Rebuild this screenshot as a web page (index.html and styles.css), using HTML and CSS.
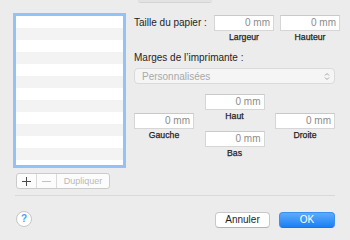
FILE: index.html
```html
<!DOCTYPE html>
<html>
<head>
    <link rel="stylesheet" href="styles.css">
</head>
<body>
    <div class="tab-edge"></div>

    <div class="main">
        <div class="list-col">
            <div class="paper-list"></div>
            <div class="seg">
                <span class="seg-btn add">
                    <svg width="9" height="9" viewBox="0 0 9 9"><path d="M4.5 0V9M0 4.5H9" stroke="#4a4a4a" stroke-width="1"/></svg>
                </span>
                <span class="seg-btn remove">
                    <svg width="9" height="9" viewBox="0 0 9 9"><path d="M0 4.5H9" stroke="#c2c2c2" stroke-width="1"/></svg>
                </span>
                <span class="seg-btn dup">Dupliquer</span>
            </div>
        </div>

        <div class="form-col">
            <div class="size-grid">
                <span class="form-label">Taille du papier :</span>
                <div class="field">0 mm</div>
                <div class="field">0 mm</div>
                <span></span>
                <span class="sub-label">Largeur</span>
                <span class="sub-label">Hauteur</span>
            </div>

            <div class="form-label margins-title">Marges de l’imprimante :</div>
            <div class="popup">
                <span>Personnalisées</span>
                <svg width="6" height="9" viewBox="0 0 6 9"><path d="M1 3.5L3 1.5L5 3.5M1 5.5L3 7.5L5 5.5" fill="none" stroke="#a4a4a4" stroke-width="1"/></svg>
            </div>

            <div class="margin-grid">
                <div class="margin-col">
                    <div class="field">0 mm</div>
                    <span class="sub-label">Gauche</span>
                </div>
                <div class="margin-col">
                    <div class="field">0 mm</div>
                    <span class="sub-label">Haut</span>
                    <div class="field bottom-field">0 mm</div>
                    <span class="sub-label">Bas</span>
                </div>
                <div class="margin-col">
                    <div class="field">0 mm</div>
                    <span class="sub-label">Droite</span>
                </div>
            </div>
        </div>
    </div>

    <div class="separator"></div>

    <div class="footer">
        <span class="help">?</span>
        <div class="actions">
            <button class="btn">Annuler</button>
            <button class="btn primary">OK</button>
        </div>
    </div>
</body>
</html>
```

FILE: styles.css
```css
body {
    margin: 0;
    background-color: #ececec;
    color: #222;
    font-family: 'Liberation Sans', Arial, sans-serif;
    font-size: 10px;
    width: 350px;
    height: 240px;
    overflow: hidden;
}
.tab-edge {
    margin-left: 138px;
    width: 74px;
    height: 2px;
    background-color: #e3e3e3;
    border-bottom: 1px solid #d3d3d3;
    border-radius: 0 0 3px 3px;
}
.main {
    display: flex;
    margin-top: 10px;
    padding-left: 13px;
}
.list-col {
    width: 113px;
}
.paper-list {
    box-sizing: border-box;
    width: 113px;
    height: 155px;
    border: 3px solid #93c2f4;
    background: repeating-linear-gradient(#ffffff 0 12px, #f3f3f3 12px 24px);
}
.seg {
    display: flex;
    box-sizing: border-box;
    width: 94px;
    height: 16px;
    margin: 5px 0 0 3px;
    border: 1px solid #cbcbcb;
    border-radius: 3px;
    background-color: #fcfcfc;
}
.seg-btn {
    display: flex;
    align-items: center;
    justify-content: center;
    border-right: 1px solid #dadada;
}
.seg-btn svg {
    shape-rendering: crispEdges;
}
.add {
    width: 19px;
}
.remove {
    width: 19px;
}
.dup {
    flex: 1;
    border-right: none;
    color: #b9b9b9;
    font-size: 9px;
}
.form-col {
    width: 201px;
    margin-left: 8px;
    padding-top: 2px;
}
.size-grid {
    display: grid;
    grid-template-columns: 74px 60px 60px;
    column-gap: 6px;
    align-items: center;
}
.form-label {
    color: #1e1e1e;
    line-height: 12px;
}
.field {
    box-sizing: border-box;
    width: 60px;
    height: 16px;
    padding-right: 3px;
    border: 1px solid #d6d6d6;
    border-top-color: #c9c9c9;
    background-color: #fff;
    color: #8c8c8c;
    line-height: 14px;
    text-align: right;
}
.sub-label {
    margin-top: 1px;
    color: #1e1e1e;
    font-size: 8.7px;
    line-height: 11px;
    text-align: center;
    -webkit-text-stroke: 0.25px #1e1e1e;
}
.margins-title {
    margin-top: 9px;
}
.popup {
    display: flex;
    justify-content: space-between;
    align-items: center;
    box-sizing: border-box;
    height: 16px;
    margin-top: 4px;
    padding: 0 4px 0 7px;
    border: 1px solid #dadada;
    border-radius: 4px;
    background-color: #f5f5f5;
    color: #a9a9a9;
}
.margin-grid {
    display: flex;
    justify-content: space-between;
    align-items: center;
    margin-top: 10px;
}
.margin-col {
    display: flex;
    flex-direction: column;
    align-items: center;
    width: 60px;
}
.bottom-field {
    margin-top: 9px;
}
.separator {
    height: 1px;
    margin: 6px 15px 0 15px;
    background-color: #d9d9d9;
}
.footer {
    display: flex;
    justify-content: space-between;
    align-items: center;
    margin-top: 14px;
    padding: 0 15px 0 16px;
}
.help {
    box-sizing: border-box;
    width: 16px;
    height: 16px;
    border: 1px solid #c6c6c6;
    border-radius: 50%;
    background-color: #fff;
    color: #4aa1fb;
    font-size: 10px;
    font-weight: bold;
    line-height: 14px;
    text-align: center;
}
.actions {
    display: flex;
    gap: 9px;
    margin-top: 2px;
}
.btn {
    box-sizing: border-box;
    width: 55px;
    height: 16px;
    padding: 0;
    border: 1px solid #c8c8c8;
    border-bottom-color: #b4b4b4;
    border-radius: 4px;
    background-color: #fff;
    color: #1e1e1e;
    font-family: 'Liberation Sans', Arial, sans-serif;
    font-size: 10px;
    line-height: 14px;
}
.btn.primary {
    width: 56px;
    border-color: #3a8ff0;
    border-bottom-color: #1f73e0;
    background: linear-gradient(#5fabfa, #1a80f5);
    color: #fff;
}
```
